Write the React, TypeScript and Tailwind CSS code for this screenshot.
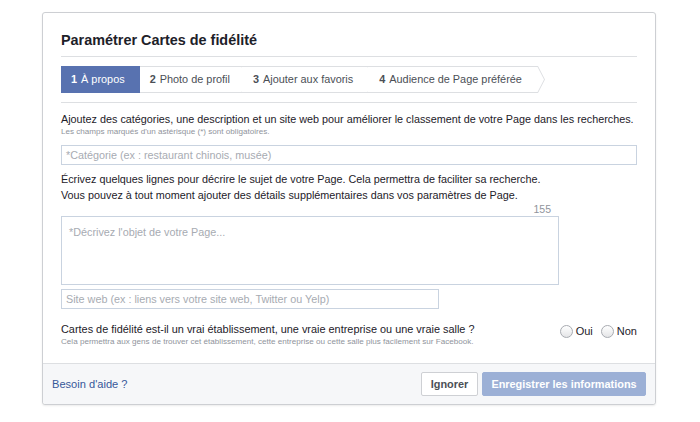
import React from "react";

const font = { fontFamily: '"Liberation Sans", Arial, sans-serif' };

function Tab({ n, label, active, pad }: { n: string; label: string; active?: boolean; pad: string }) {
  return (
    <div
      className={
        "relative flex items-center h-[27px] text-[10.9px] " +
        pad +
        " " +
        (active ? "bg-[#5872b0] text-white" : "bg-white text-[#4b4f56] border-y border-[#dddfe2]")
      }
    >
      <span className="font-bold">{n}</span>
      <span className="ml-[4px]">{label}</span>
      {active ? (
        <svg className="absolute right-[-7px] top-0" width="8" height="27" viewBox="0 0 8 27">
          <polygon points="0,0 7,13.5 0,27" fill="#5872b0" />
        </svg>
      ) : (
        <svg className="absolute right-[-7px] top-[-1px]" width="8" height="27" viewBox="0 0 8 27">
          <polygon points="0,0 1,0 8,13.5 1,27 0,27 7,13.5" fill="#dddfe2" />
        </svg>
      )}
    </div>
  );
}

function Radio({ label }: { label: string }) {
  return (
    <label className="flex items-center gap-[3px] text-[11px] text-[#1d2129]">
      <span className="w-[13px] h-[13px] rounded-full border border-[#a8abb1] bg-gradient-to-b from-[#ffffff] to-[#e4e5e7]" />
      <span>{label}</span>
    </label>
  );
}

export default function App() {
  return (
    <div className="w-[700px] h-[422px] bg-white" style={font}>
      <div className="ml-[42px] mt-[12px] w-[614px] h-[393px] border border-[#cdcfd3] rounded-[3px] flex flex-col bg-white shadow-[0_1px_2px_rgba(0,0,0,0.08)]">
        <div className="flex-1 px-[18px] pt-[18px]">
          <div className="text-[14.4px] leading-[18px] font-bold text-[#1d2129]">Paramétrer Cartes de fidélité</div>
          <div className="mt-[7px] h-px bg-[#dddfe2]" />
          <div className="mt-[9px] flex">
            <Tab n="1" label="À propos" active pad="pl-[10px] pr-[15px]" />
            <Tab n="2" label="Photo de profil" pad="pl-[10px] pr-[12px]" />
            <Tab n="3" label="Ajouter aux favoris" pad="pl-[11px] pr-[15px]" />
            <Tab n="4" label="Audience de Page préférée" pad="pl-[11px] pr-[16px]" />
          </div>
          <div className="mt-[9px] h-px bg-[#dddfe2]" />
          <div className="mt-[9px] text-[10.8px] leading-[14px] text-[#1d2129] whitespace-nowrap">
            Ajoutez des catégories, une description et un site web pour améliorer le classement de votre Page dans les recherches.
          </div>
          <div className="text-[8.1px] leading-[11px] text-[#90949c]">Les champs marqués d'un astérisque (*) sont obligatoires.</div>
          <div className="mt-[8px] h-[20px] border border-[#c9d3e0] flex items-center px-[4px] text-[10.8px] text-[#a7abb2]">
            *Catégorie (ex : restaurant chinois, musée)
          </div>
          <div className="mt-[6px] text-[10.8px] leading-[16px] text-[#1d2129]">
            <div>Écrivez quelques lignes pour décrire le sujet de votre Page. Cela permettra de faciliter sa recherche.</div>
            <div>Vous pouvez à tout moment ajouter des détails supplémentaires dans vos paramètres de Page.</div>
          </div>
          <div className="w-[498px] text-right pr-[8px] text-[10.5px] leading-[13px] text-[#90949c]">155</div>
          <div className="w-[498px] h-[69px] border border-[#c9d3e0] px-[7px] pt-[7px] text-[10.8px] text-[#a7abb2]">
            *Décrivez l'objet de votre Page...
          </div>
          <div className="mt-[4px] w-[378px] h-[20px] border border-[#c9d3e0] flex items-center px-[4px] text-[10.8px] text-[#a7abb2]">
            Site web (ex : liens vers votre site web, Twitter ou Yelp)
          </div>
          <div className="mt-[13px] flex items-start justify-between">
            <div>
              <div className="text-[10.9px] leading-[14px] text-[#1d2129]">
                Cartes de fidélité est-il un vrai établissement, une vraie entreprise ou une vraie salle ?
              </div>
              <div className="text-[8.1px] leading-[11px] text-[#90949c]">
                Cela permettra aux gens de trouver cet établissement, cette entreprise ou cette salle plus facilement sur Facebook.
              </div>
            </div>
            <div className="flex items-center gap-[8px] mt-[1px]">
              <Radio label="Oui" />
              <Radio label="Non" />
            </div>
          </div>
        </div>
        <div className="h-[41px] border-t border-[#dddfe2] bg-[#f6f7f9] rounded-b-[3px] flex items-center justify-between pl-[9px] pr-[9px]">
          <span className="text-[11.1px] text-[#365899]">Besoin d'aide ?</span>
          <div className="flex items-center gap-[4px]">
            <button className="h-[24px] w-[57px] border border-[#ced0d4] bg-[#ffffff] rounded-[2px] text-[10.9px] font-bold text-[#4b4f56]">
              Ignorer
            </button>
            <button className="h-[24px] w-[164px] border border-[#9cb0d6] bg-[#9cb0d6] rounded-[2px] text-[10.9px] font-bold text-white">
              Enregistrer les informations
            </button>
          </div>
        </div>
      </div>
    </div>
  );
}
